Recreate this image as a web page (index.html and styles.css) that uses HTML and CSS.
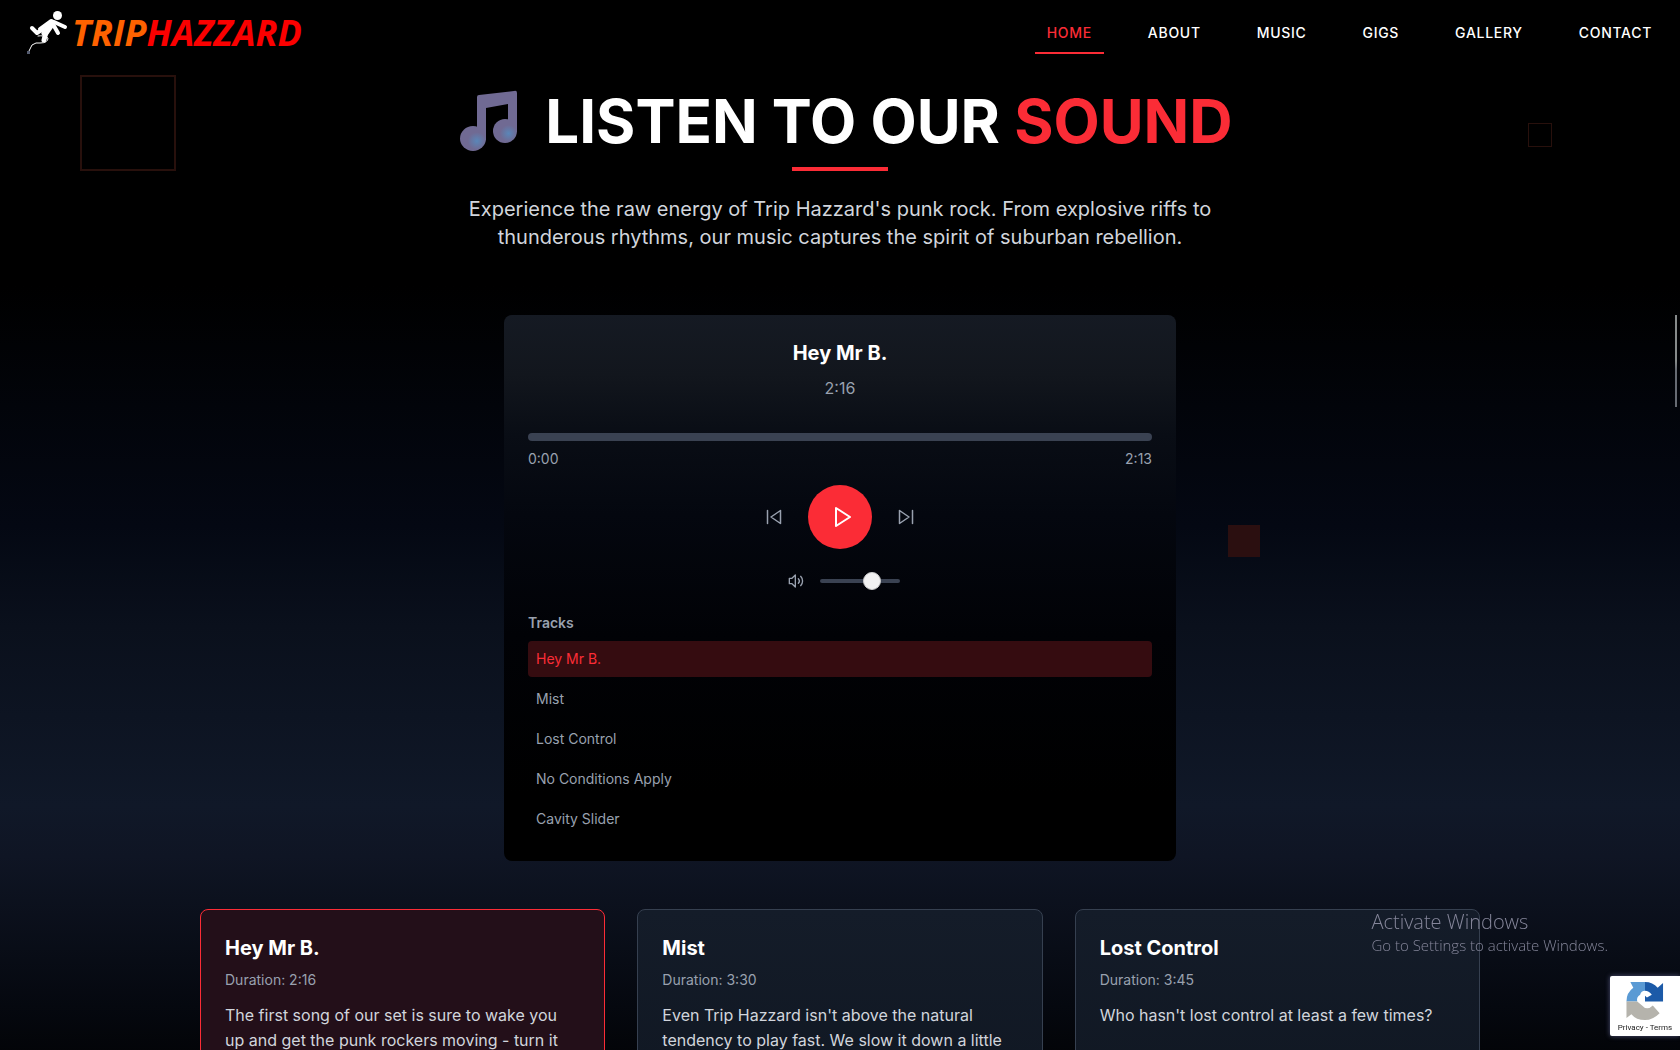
FILE: index.html
```html
<!DOCTYPE html>
<html lang="en">
<head>
    <meta charset="UTF-8">
    <meta name="viewport" content="width=device-width, initial-scale=1.0">
    <title>Trip Hazzard</title>
    <link rel="stylesheet" href="styles.css">
</head>
<body>
    <!-- navigation -->
    <header class="navbar">
        <a class="logo" href="#home">
            <svg class="logo-man" viewBox="0 0 42 46" width="42" height="46" aria-hidden="true">
                <circle cx="31.500" cy="5.500" r="4.500" fill="#fff"/>
                <g fill="none" stroke="#fff" stroke-linecap="round" stroke-linejoin="round">
                    <path d="M26 13L19 23" stroke-width="7"/>
                    <path d="M25 11L14 19" stroke-width="4"/>
                    <path d="M28 12L39 17" stroke-width="4"/>
                    <path d="M28 16L32 23" stroke-width="4"/>
                    <path d="M17 19L11 23L6 18" stroke-width="4"/>
                    <path d="M20 22L18 30" stroke-width="5"/>
                    <path d="M2 43L6 35Q10 32 14 33Q22 33 22 28Q18 25 12 26" stroke-width="1"/>
                </g>
                <path d="M1 41h3v3h-3z" fill="#555c70"/>
            </svg>
            <span class="logo-text"><span class="trip">TRIP</span><span class="hazzard">HAZZARD</span></span>
        </a>
        <nav class="menu">
            <a class="active" href="#home">HOME</a>
            <a href="#about">ABOUT</a>
            <a href="#music">MUSIC</a>
            <a href="#gigs">GIGS</a>
            <a href="#gallery">GALLERY</a>
            <a href="#contact">CONTACT</a>
        </nav>
    </header>

    <main class="music" id="music">
        <div class="intro">
            <h1>
                <svg class="note" viewBox="0 0 60 62" width="60" height="62" aria-hidden="true">
                    <defs>
                        <radialGradient id="shine" cx="0.65" cy="0.6">
                            <stop offset="0" stop-color="#5a86b8"/>
                            <stop offset="0.7" stop-color="#706a93"/>
                        </radialGradient>
                    </defs>
                    <path d="M18 7Q18 5 20 5L55 1Q58 0 58 3V42H49V14L27 18V50H18z" fill="#706a93"/>
                    <ellipse cx="14" cy="48.500" rx="13" ry="12.500" fill="url(#shine)"/>
                    <ellipse cx="46" cy="41" rx="12" ry="12" fill="url(#shine)"/>
                </svg>
                <span>LISTEN TO OUR <span class="red">SOUND</span></span>
            </h1>
            <div class="underline"></div>
            <p>Experience the raw energy of Trip Hazzard's punk rock. From explosive riffs to thunderous rhythms, our music captures the spirit of suburban rebellion.</p>
        </div>

        <!-- player -->
        <section class="player">
            <h2>Hey Mr B.</h2>
            <p class="length">2:16</p>
            <progress class="bar" value="0" max="133" aria-label="Progress"></progress>
            <div class="times"><span>0:00</span><span>2:13</span></div>
            <div class="controls">
                <button type="button" class="skip" aria-label="Previous">
                    <svg viewBox="0 0 20 20" width="20" height="20"><path d="M3.500 3.500V16.500M16.500 3.500V16.500L7 10z"/></svg>
                </button>
                <button type="button" class="play" aria-label="Play">
                    <svg viewBox="0 0 24 24" width="24" height="24"><path d="M6 3L20 12L6 21z"/></svg>
                </button>
                <button type="button" class="skip" aria-label="Next">
                    <svg viewBox="0 0 20 20" width="20" height="20"><path d="M16.500 3.500V16.500M3.500 3.500V16.500L13 10z"/></svg>
                </button>
            </div>
            <div class="volume">
                <svg viewBox="0 0 24 24" width="16" height="16" aria-hidden="true"><path d="M11 3V21L6 16H2V8H6zM15.500 8.500a5 5 0 0 1 0 7M19 5a10 10 0 0 1 0 14"/></svg>
                <input type="range" min="0" max="100" value="70" aria-label="Volume">
            </div>
            <h3>Tracks</h3>
            <div class="tracks">
                <button type="button" class="current">Hey Mr B.</button>
                <button type="button">Mist</button>
                <button type="button">Lost Control</button>
                <button type="button">No Conditions Apply</button>
                <button type="button">Cavity Slider</button>
            </div>
        </section>

        <!-- songs -->
        <div class="songs">
            <article class="song selected">
                <h2>Hey Mr B.</h2>
                <p class="duration">Duration: 2:16</p>
                <p>The first song of our set is sure to wake you up and get the punk rockers moving - turn it</p>
            </article>
            <article class="song">
                <h2>Mist</h2>
                <p class="duration">Duration: 3:30</p>
                <p>Even Trip Hazzard isn't above the natural tendency to play fast. We slow it down a little</p>
            </article>
            <article class="song">
                <h2>Lost Control</h2>
                <p class="duration">Duration: 3:45</p>
                <p>Who hasn't lost control at least a few times?</p>
            </article>
        </div>

        <div class="square square-big"></div>
        <div class="square square-small"></div>
        <div class="square square-fill"></div>
    </main>

    <div class="scroll-line"></div>

    <div class="activate">
        <p class="activate-title">Activate Windows</p>
        <p>Go to Settings to activate Windows.</p>
    </div>

    <div class="captcha">
        <svg viewBox="0 0 40 40" width="40" height="40" aria-hidden="true">
            <path d="M38.500 2V21H20V15L22 17L27 14Q24 10 20 10V1Q28 1 33 7z" fill="#1c5aa8"/>
            <path d="M20 1V10Q16 10 15 14Q11 16 12 21H1Q1 12 8 7L5 1z" fill="#5a9ad4"/>
            <path d="M1 21H12L17 25Q22 31 28 25L35 33Q28 40 20 40Q11 40 6 34L1 38z" fill="#b5b3ac"/>
        </svg>
        <div class="captcha-links"><a href="#privacy">Privacy</a> - <a href="#terms">Terms</a></div>
    </div>
</body>
</html>
```

FILE: styles.css
```css
*{
    margin: 0;
    padding: 0;
    box-sizing: border-box;
}
body{
    height: 100vh;
    overflow: hidden;
    background-color: #000;
    color: #fff;
    font-family: Inter, "Liberation Sans", sans-serif;
    font-size: 16px;
    line-height: 24px;
}
a{
    color: inherit;
    text-decoration: none;
}
button{
    border: 0;
    background: none;
    color: inherit;
    font: inherit;
}

/* navbar */
.navbar{
    display: flex;
    justify-content: space-between;
    align-items: center;
    height: 66px;
    padding: 0 16px 0 26px;
}
.logo{
    display: flex;
    align-items: center;
    gap: 4px;
}
.logo-text{
    font-family: "Liberation Sans Narrow", "Open Sans", sans-serif;
    font-size: 36px;
    font-weight: bold;
    font-style: italic;
    line-height: 40px;
}
.trip{
    color: #ff6200;
}
.hazzard{
    color: #fb0000;
}
.menu{
    display: flex;
    gap: 32px;
}
.menu a{
    padding: 10px 12px 9px;
    border-bottom: 2px solid transparent;
    font-size: 14px;
    font-weight: 500;
    line-height: 20px;
    letter-spacing: 0.05em;
}
.menu .active{
    border-color: #fb2c36;
    color: #fb2c36;
}

/* intro */
.music{
    position: relative;
    background: linear-gradient(#000 220px, #02040a 340px, #040813 460px, #0a101c 560px, #101828 740px, #0f1524 790px, #05080f 940px, #000 1040px);
}
.intro{
    display: flex;
    flex-direction: column;
    align-items: center;
    padding: 24px 16px 64px;
}
h1{
    display: flex;
    align-items: center;
    gap: 26px;
    padding-left: 12px;
    font-size: 60px;
    font-weight: 700;
    line-height: 60px;
}
.red{
    color: #fb2c36;
}
.underline{
    width: 96px;
    height: 4px;
    margin: 15px 0 24px;
    background-color: #fb2c36;
}
.intro p{
    max-width: 768px;
    color: #d1d5dc;
    font-size: 20px;
    line-height: 28px;
    text-align: center;
}

/* player */
.player{
    max-width: 672px;
    margin: 0 auto;
    padding: 24px;
    border-radius: 8px;
    background: linear-gradient(#151a23, #12161d 60px, #090d15 120px, #04070f 200px, #010206 320px, #000 480px);
}
.player h2{
    margin-bottom: 9px;
    font-size: 20px;
    font-weight: 700;
    line-height: 28px;
    text-align: center;
}
.length{
    margin-bottom: 33px;
    color: #99a1af;
    text-align: center;
}
.bar{
    display: block;
    width: 100%;
    height: 8px;
    margin-bottom: 8px;
    border: 0;
    border-radius: 4px;
    background-color: #3a4252;
    overflow: hidden;
    appearance: none;
}
.bar::-webkit-progress-bar{
    background-color: #3a4252;
}
.bar::-webkit-progress-value{
    background-color: #fb2c36;
}
.times{
    display: flex;
    justify-content: space-between;
    margin-bottom: 16px;
    color: #99a1af;
    font-size: 14px;
    line-height: 20px;
}
.controls{
    display: flex;
    justify-content: center;
    align-items: center;
    gap: 16px;
    margin-bottom: 16px;
}
.controls svg,
.volume svg{
    display: block;
    fill: none;
    stroke: currentColor;
    stroke-width: 2;
    stroke-linejoin: round;
    stroke-linecap: round;
}
.controls .skip svg{
    stroke-width: 1.5;
}
.skip{
    padding: 8px;
    color: #99a1af;
}
.play{
    width: 64px;
    height: 64px;
    padding: 0 18px 0 22px;
    border-radius: 50%;
    background-color: #fb2c36;
}
.volume{
    display: flex;
    justify-content: center;
    align-items: center;
    gap: 16px;
    height: 32px;
    margin-bottom: 16px;
    padding-left: 8px;
    color: #99a1af;
}
.volume input{
    width: 80px;
    height: 4px;
    border-radius: 4px;
    background-color: #3a4252;
    appearance: none;
}
.volume input::-webkit-slider-thumb{
    width: 18px;
    height: 18px;
    border: 1px solid #ccc;
    border-radius: 50%;
    background-color: #f2f2f2;
    appearance: none;
}
.player h3{
    margin-bottom: 8px;
    color: #99a1af;
    font-size: 14px;
    font-weight: 600;
    line-height: 20px;
}
.tracks{
    display: flex;
    flex-direction: column;
    gap: 4px;
}
.tracks button{
    padding: 8px;
    border-radius: 4px;
    color: #99a1af;
    font-size: 14px;
    line-height: 20px;
    text-align: left;
}
.tracks .current{
    background-color: #350c10;
    color: #fb2c36;
}

/* songs */
.songs{
    display: grid;
    grid-template-columns: repeat(3, 1fr);
    gap: 32px;
    max-width: 1280px;
    margin: 48px auto 0;
    padding-bottom: 64px;
}
.song{
    min-height: 200px;
    padding: 24px;
    border: 1px solid #364050;
    border-radius: 8px;
    background: linear-gradient(#141c29, #101722);
    color: #d1d5dc;
    line-height: 25px;
}
.song.selected{
    border-color: #fb2c36;
    background: #230f19;
}
.song h2{
    margin-bottom: 8px;
    color: #fff;
    font-size: 20px;
    font-weight: 700;
    line-height: 28px;
}
.duration{
    margin-bottom: 13px;
    color: #99a1af;
    font-size: 14px;
    line-height: 20px;
}

/* floating squares */
.square{
    position: absolute;
}
.square-big{
    top: 9px;
    left: 80px;
    width: 96px;
    height: 96px;
    border: 2px solid #28100c;
}
.square-small{
    top: 57px;
    right: 128px;
    width: 24px;
    height: 24px;
    border: 1px solid #28100c;
}
.square-fill{
    top: 459px;
    right: 25%;
    width: 32px;
    height: 32px;
    background-color: #2b0f10;
}

/* overlays */
.scroll-line{
    position: fixed;
    top: 315px;
    right: 3px;
    width: 2px;
    height: 92px;
    background: linear-gradient(#868a8a 50%, #666a72 60%);
}
.activate{
    position: fixed;
    right: 72px;
    bottom: 95px;
    color: #85869a;
    font-family: "Open Sans", sans-serif;
    font-size: 15px;
    font-weight: 300;
    line-height: 20px;
}
.activate-title{
    font-size: 20px;
    line-height: 26px;
}
.captcha{
    position: fixed;
    right: 0;
    bottom: 14px;
    display: flex;
    flex-direction: column;
    align-items: center;
    width: 70px;
    height: 60px;
    padding-top: 5px;
    border-radius: 2px 0 0 2px;
    background-color: #fff;
    box-shadow: 0 0 5px #50547a;
}
.captcha-links{
    color: #222;
    font-family: Roboto, sans-serif;
    font-size: 8px;
    line-height: 16px;
}
```
